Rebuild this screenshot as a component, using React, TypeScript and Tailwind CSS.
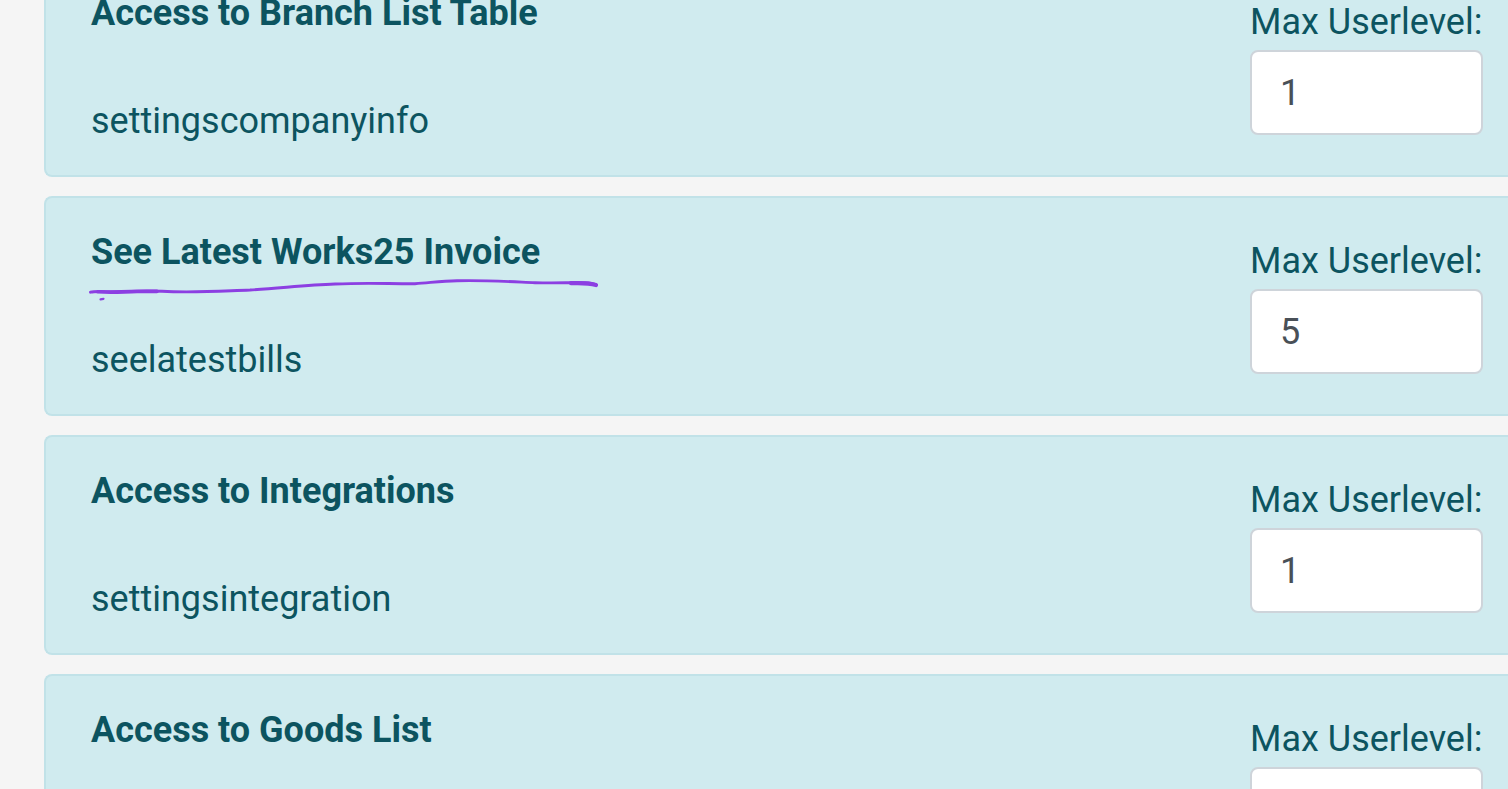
import React, { useState } from 'react';

type Permission = {
  title: string;
  code: string;
  level: string;
  marked?: boolean;
};

const permissions: Permission[] = [
  { title: 'Access to Branch List Table', code: 'settingscompanyinfo', level: '1' },
  { title: 'See Latest Works25 Invoice', code: 'seelatestbills', level: '5', marked: true },
  { title: 'Access to Integrations', code: 'settingsintegration', level: '1' },
  { title: 'Access to Goods List', code: '', level: '' },
];

// Hand drawn pen line under a title
const PenLine = () => (
  <svg
    className="absolute -left-1 top-full pointer-events-none"
    width="514"
    height="24"
    viewBox="0 0 514 24"
    fill="none"
    stroke="#8c3fe2"
    strokeLinecap="round"
    strokeLinejoin="round"
    aria-hidden="true"
  >
    <path
      d="M3.500 13.200C8 11.800 15 12.500 24 12.800C45 12 60 11.500 75 12.300C105 14 125 12.500 163 11C195 9 220 6 248 5C280 3.500 300 4.800 328 4.700C345 3.500 355 2 370 1.800C395 1 420 2.500 448 3.700C468 4.200 485 3.500 498 3.800C504 4 507 4.700 509 6"
      strokeWidth="2.900"
    />
    <path d="M11 12.800C25 14 35 12.800 50 12.500L70 12.400" strokeWidth="3.600" />
    <path d="M484 4.200C494 3.800 503 4.200 509 6" strokeWidth="4.200" />
    <path d="M13.500 20.300L16.500 19.800" strokeWidth="2.200" />
  </svg>
);

const PermissionCard = ({ title, code, level, marked }: Permission) => {
  const [value, setValue] = useState(level);
  const inputId = `level-${title.toLowerCase().replace(/\s+/g, '-')}`;

  return (
    <section className="flex justify-between rounded-l-lg border-2 border-r-0 border-[#c1e2e8] bg-[#d0ebef] py-[27px] pl-[45px] pr-[25px]">
      <div className="min-w-0">
        <div className="relative w-fit">
          <h2 className="font-bold">{title}</h2>
          {marked && <PenLine />}
        </div>
        <p className="mt-[54px] min-h-[54px]">{code}</p>
      </div>

      {/* Level */}
      <div className="flex w-[233px] shrink-0 flex-col gap-px pt-[9px]">
        <label htmlFor={inputId} className="whitespace-nowrap">
          Max Userlevel:
        </label>
        <input
          id={inputId}
          type="text"
          inputMode="numeric"
          value={value}
          onChange={(e) => setValue(e.target.value)}
          className="h-[85px] w-full rounded-lg border-2 border-[#ced4da] bg-white px-7 text-[#495057] outline-none focus:border-[#80bdff]"
        />
      </div>
    </section>
  );
};

const App = () => {
  return (
    <div className="h-screen overflow-hidden bg-[#f5f5f5] font-['Roboto',sans-serif] text-[36px] leading-[54px] text-[#0c5460]">
      <main className="-mt-[43px] flex flex-col gap-[19px] pl-11">
        {permissions.map((permission) => (
          <PermissionCard key={permission.title} {...permission} />
        ))}
      </main>
    </div>
  );
};

export default App;
